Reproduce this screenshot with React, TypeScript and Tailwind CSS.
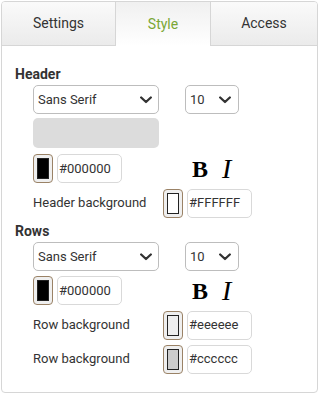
const font = { fontFamily: 'Roboto, "Liberation Sans", sans-serif' };

type SelectProps = { value: string; width: string; pr: string };

const Chevron = () => (
  <svg width="12" height="8" viewBox="0 0 12 8" className="text-[#333]">
    <polyline points="1.2,1.5 6,6 10.8,1.5" fill="none" stroke="currentColor" strokeWidth="2.3" strokeLinecap="round" strokeLinejoin="round" />
  </svg>
);

const FakeSelect = ({ value, width, pr }: SelectProps) => (
  <div
    className={`${width} ${pr} h-[29px] border border-[#bdbdbd] rounded-[5px] bg-white flex items-center justify-between pl-[4px]`}
  >
    <span className="text-[13px] text-[#333]">{value}</span>
    <Chevron />
  </div>
);

const Swatch = ({ color }: { color: string }) => (
  <div className="w-[20px] h-[29px] border border-[#9a8266] rounded-[4px] p-[3px] bg-[#efefef]">
    <div className="w-full h-full border border-[#222]" style={{ background: color }} />
  </div>
);

const HexInput = ({ value }: { value: string }) => (
  <div className="w-[65px] h-[29px] border border-[#d9d9d9] rounded-[5px] bg-white flex items-center pl-[1px]">
    <span className="text-[13px] text-[#333]">{value}</span>
  </div>
);

const BoldItalic = () => (
  <div className="flex items-center gap-[14px] ml-[66px]" style={{ fontFamily: '"Liberation Serif", serif' }}>
    <span className="font-bold text-[24px] leading-none text-black">B</span>
    <span className="italic text-[28px] leading-none text-black">I</span>
  </div>
);

const BgRow = ({ label, color, hex }: { label: string; color: string; hex: string }) => (
  <div className="flex items-center h-[28px]">
    <span className="w-[130px] text-[13px] text-[#333]">{label}</span>
    <Swatch color={color} />
    <div className="w-[4px]" />
    <HexInput value={hex} />
  </div>
);

export default function App() {
  return (
    <div className="w-[319px] h-[394px] bg-white p-[1px]" style={font}>
      <div className="h-[392px] border border-[#d6d6d6] rounded-[4px] overflow-hidden flex flex-col">
        <div className="flex h-[44px]">
          <div className="w-[114px] border-b border-r border-[#d6d6d6] bg-gradient-to-b from-[#fafafa] to-[#ebebeb] flex items-center justify-center text-[14px] text-[#333]">
            Settings
          </div>
          <div className="w-[94px] bg-gradient-to-b from-[#f0f0f0] to-white flex items-center justify-center text-[14px] text-[#7aa735]">
            Style
          </div>
          <div className="flex-1 border-b border-l border-[#d6d6d6] bg-gradient-to-b from-[#fafafa] to-[#ebebeb] flex items-center justify-center text-[14px] text-[#333]">
            Access
          </div>
        </div>

        <div className="pl-[13px] pt-[20px]">
          <div className="text-[14px] font-bold text-[#333] leading-[16px]">Header</div>
          <div className="pl-[18px] pt-[3px] flex flex-col">
            <div className="flex items-center gap-[26px]">
              <FakeSelect value="Sans Serif" width="w-[126px]" pr="pr-[6px]" />
              <FakeSelect value="10" width="w-[54px]" pr="pr-[7px]" />
            </div>
            <div className="w-[126px] h-[30px] rounded-[5px] bg-[#dcdcdc] mt-[4px]" />
            <div className="flex items-center gap-[4px] mt-[6px]">
              <Swatch color="#000000" />
              <HexInput value="#000000" />
              <BoldItalic />
            </div>
            <div className="mt-[6px]">
              <BgRow label="Header background" color="#FFFFFF" hex="#FFFFFF" />
            </div>
          </div>

          <div className="text-[14px] font-bold text-[#333] leading-[16px] mt-[6px]">Rows</div>
          <div className="pl-[18px] pt-[3px] flex flex-col">
            <div className="flex items-center gap-[26px]">
              <FakeSelect value="Sans Serif" width="w-[126px]" pr="pr-[6px]" />
              <FakeSelect value="10" width="w-[54px]" pr="pr-[7px]" />
            </div>
            <div className="flex items-center gap-[4px] mt-[5px]">
              <Swatch color="#000000" />
              <HexInput value="#000000" />
              <BoldItalic />
            </div>
            <div className="mt-[6px]">
              <BgRow label="Row background" color="#eeeeee" hex="#eeeeee" />
            </div>
            <div className="mt-[6px]">
              <BgRow label="Row background" color="#cccccc" hex="#cccccc" />
            </div>
          </div>
        </div>
      </div>
    </div>
  );
}
